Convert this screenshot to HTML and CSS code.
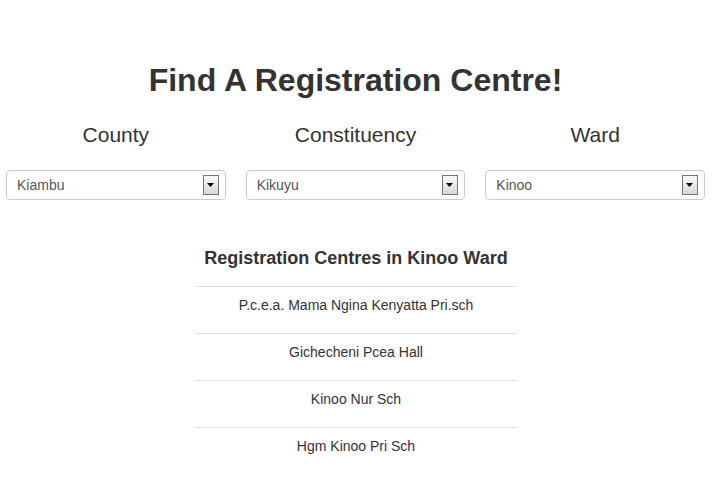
FILE: index.html
```html
<!DOCTYPE html>
<html>
<head>
<meta charset="utf-8">
<link rel="stylesheet" href="styles.css">
</head>
<body>
<div class="page">
  <h1 class="title">Find A Registration Centre!</h1>
  <div class="filters">
    <div class="col">
      <h3 class="label">County</h3>
      <div class="select"><span class="value">Kiambu</span><span class="arrow"><svg width="8" height="5" viewBox="0 0 8 5"><path d="M0 0H7L3.5 4Z" fill="#000"/></svg></span></div>
    </div>
    <div class="col">
      <h3 class="label">Constituency</h3>
      <div class="select"><span class="value">Kikuyu</span><span class="arrow"><svg width="8" height="5" viewBox="0 0 8 5"><path d="M0 0H7L3.5 4Z" fill="#000"/></svg></span></div>
    </div>
    <div class="col">
      <h3 class="label">Ward</h3>
      <div class="select"><span class="value">Kinoo</span><span class="arrow"><svg width="8" height="5" viewBox="0 0 8 5"><path d="M0 0H7L3.5 4Z" fill="#000"/></svg></span></div>
    </div>
  </div>
  <div class="results">
    <h4 class="results-title">Registration Centres in Kinoo Ward</h4>
    <ul class="list">
      <li>P.c.e.a. Mama Ngina Kenyatta Pri.sch</li>
      <li>Gichecheni Pcea Hall</li>
      <li>Kinoo Nur Sch</li>
      <li>Hgm Kinoo Pri Sch</li>
    </ul>
  </div>
</div>
</body>
</html>
```

FILE: styles.css
```css
html, body {
  margin: 0;
  padding: 0;
  background: #fff;
}
body {
  font-family: "Liberation Sans", Arial, sans-serif;
  font-size: 14px;
  color: #333;
}
.page {
  padding: 0 12px 0 6px;
}
.title {
  margin: 61px 0 0;
  text-align: center;
  font-size: 32px;
  font-weight: bold;
  line-height: 38px;
}
.filters {
  display: flex;
  gap: 20px;
  margin-top: 24px;
}
.col {
  flex: 1;
  display: flex;
  flex-direction: column;
}
.label {
  margin: 0;
  text-align: center;
  font-size: 21px;
  font-weight: normal;
  line-height: 24px;
}
.select {
  margin-top: 23px;
  border: 1px solid #ccc;
  border-radius: 4px;
  display: flex;
  align-items: center;
  justify-content: space-between;
  padding: 0 6px 0 10px;
  box-sizing: border-box;
  height: 30px;
}
.value {
  color: #555;
  font-size: 14px;
}
.arrow {
  width: 14px;
  height: 18px;
  border: 1px solid #777;
  background: linear-gradient(#fafafa, #d8d8d8);
  display: flex;
  align-items: center;
  justify-content: center;
}
.arrow svg {
  display: block;
  margin-top: 1px;
}
.results {
  width: 322px;
  margin: 47px 0 0 189px;
}
.results-title {
  margin: 0;
  text-align: center;
  font-size: 18px;
  font-weight: bold;
  line-height: 22px;
  padding-bottom: 17px;
}
.list {
  list-style: none;
  margin: 0;
  padding: 0;
}
.list li {
  border-top: 1px solid #ddd;
  line-height: 36px;
  height: 46px;
  text-align: center;
}
```
